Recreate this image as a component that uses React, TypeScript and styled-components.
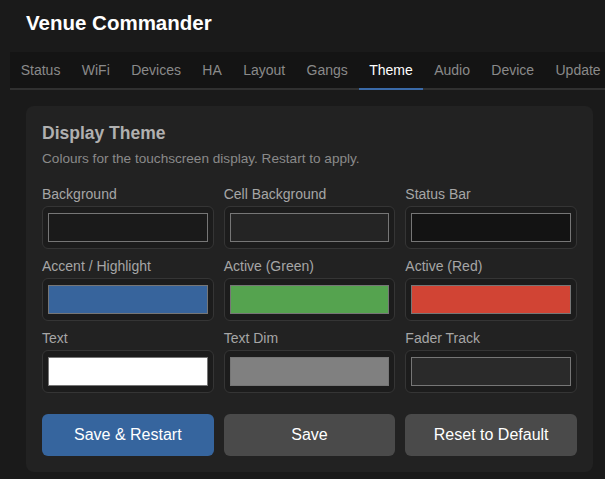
import React from "react";
import styled, { createGlobalStyle } from "styled-components";

const GlobalStyle = createGlobalStyle`
  html, body {
    margin: 0;
    padding: 0;
    background: #1a1a1a;
    overflow: hidden;
    font-family: "Liberation Sans", Arial, sans-serif;
  }
`;

const Page = styled.div`
  width: 599px;
  margin-left: 10px;
  min-height: 479px;
`;

const Header = styled.div`
  padding: 11px 16px 18px;
`;

const Title = styled.h1`
  margin: 0;
  color: #ffffff;
  font-size: 20.5px;
  font-weight: bold;
  line-height: 23px;
`;

const TabBar = styled.nav`
  display: flex;
  background: #141414;
  border-bottom: 2px solid #303030;
  white-space: nowrap;
`;

const Tab = styled.div<{ $active?: boolean }>`
  padding: 10px 10.7px;
  font-size: 14px;
  line-height: 16px;
  color: ${({ $active }) => ($active ? "#ffffff" : "#8a8a8a")};
  border-bottom: 2px solid ${({ $active }) => ($active ? "#3a6aa8" : "transparent")};
  margin-bottom: -2px;
`;

const Card = styled.section`
  margin: 16px 16px 0;
  background: #222222;
  border-radius: 8px;
  padding: 17px 16px 16px;
`;

const Heading = styled.h2`
  margin: 0;
  color: #b0b0b0;
  font-size: 17.5px;
  font-weight: bold;
  line-height: 20px;
`;

const Subtitle = styled.p`
  margin: 8px 0 19px;
  color: #8a8a8a;
  font-size: 13.6px;
  line-height: 16px;
`;

const Grid = styled.div`
  display: grid;
  grid-template-columns: repeat(3, 1fr);
  column-gap: 10px;
  row-gap: 9px;
`;

const Field = styled.div`
  display: flex;
  flex-direction: column;
  gap: 4px;
`;

const Label = styled.label`
  color: #a6a6a6;
  font-size: 14px;
  line-height: 16px;
`;

const SwatchBox = styled.div`
  height: 43px;
  box-sizing: border-box;
  padding: 6px 5px;
  background: #1c1c1c;
  border: 1px solid #353535;
  border-radius: 6px;
  display: flex;
`;

const Swatch = styled.div<{ $color: string }>`
  flex: 1;
  background: ${({ $color }) => $color};
  border: 1px solid #767676;
`;

const Actions = styled.div`
  display: grid;
  grid-template-columns: repeat(3, 1fr);
  gap: 10px;
  margin-top: 21px;
`;

const Button = styled.button<{ $primary?: boolean }>`
  height: 42px;
  border: none;
  border-radius: 6px;
  background: ${({ $primary }) => ($primary ? "#36659e" : "#4a4a4a")};
  color: #ffffff;
  font-family: "Liberation Sans", Arial, sans-serif;
  font-size: 16px;
  cursor: pointer;
`;

const tabs = ["Status", "WiFi", "Devices", "HA", "Layout", "Gangs", "Theme", "Audio", "Device", "Update"];

const colours = [
  { label: "Background", value: "#1a1a1a" },
  { label: "Cell Background", value: "#242424" },
  { label: "Status Bar", value: "#131313" },
  { label: "Accent / Highlight", value: "#37649c" },
  { label: "Active (Green)", value: "#55a34f" },
  { label: "Active (Red)", value: "#d14434" },
  { label: "Text", value: "#ffffff" },
  { label: "Text Dim", value: "#808080" },
  { label: "Fader Track", value: "#2a2a2a" },
];

const App: React.FC = () => {
  return (
    <Page>
      <GlobalStyle />
      <Header>
        <Title>Venue Commander</Title>
      </Header>
      <TabBar>
        {tabs.map((t) => (
          <Tab key={t} $active={t === "Theme"}>
            {t}
          </Tab>
        ))}
      </TabBar>
      <Card>
        <Heading>Display Theme</Heading>
        <Subtitle>Colours for the touchscreen display. Restart to apply.</Subtitle>
        <Grid>
          {colours.map((c) => (
            <Field key={c.label}>
              <Label>{c.label}</Label>
              <SwatchBox>
                <Swatch $color={c.value} />
              </SwatchBox>
            </Field>
          ))}
        </Grid>
        <Actions>
          <Button $primary>Save &amp; Restart</Button>
          <Button>Save</Button>
          <Button>Reset to Default</Button>
        </Actions>
      </Card>
    </Page>
  );
};

export default App;
